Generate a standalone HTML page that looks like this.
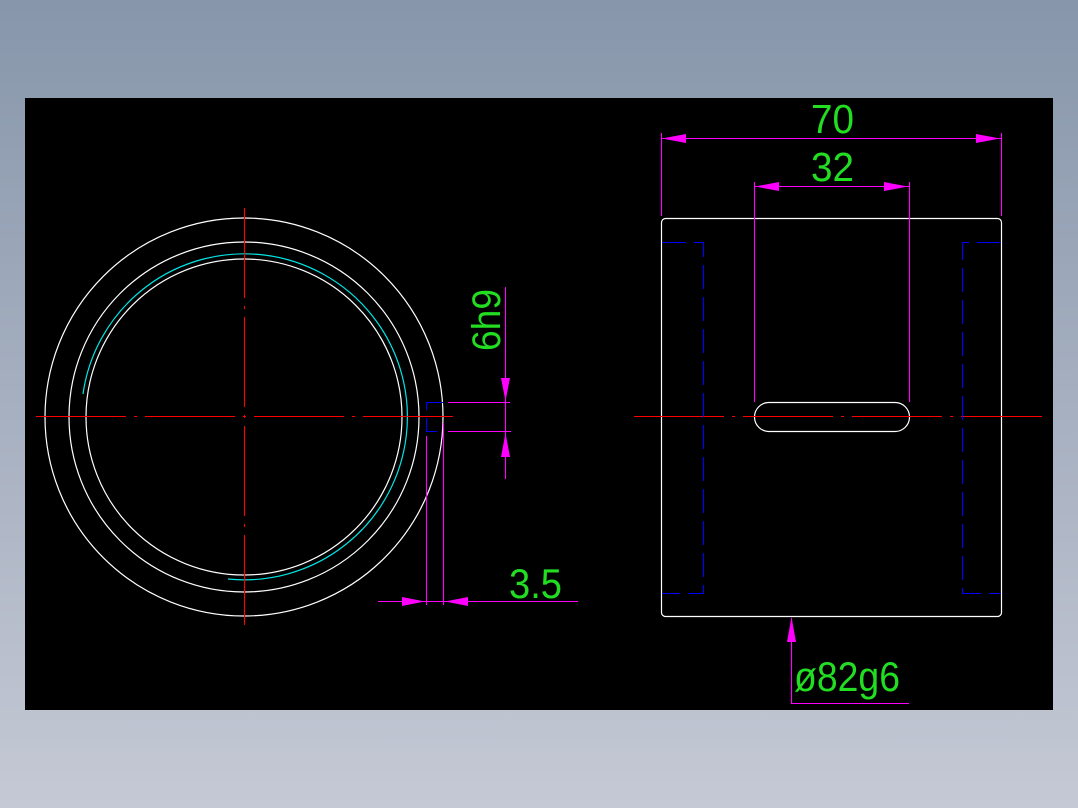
<!DOCTYPE html>
<html><head><meta charset="utf-8"><style>
html,body{margin:0;padding:0;width:1078px;height:808px;overflow:hidden;background:linear-gradient(#8796ab,#c5c9d5);}
svg{position:absolute;left:0;top:0}
text{font-family:"Liberation Sans",sans-serif;fill:#22dd22;font-weight:normal}
</style></head><body>
<svg width="1078" height="808" viewBox="0 0 1078 808">
<rect x="25" y="98" width="1028" height="612" fill="#000"/>
<g fill="none" stroke="#fff" stroke-width="1.2">
<circle cx="244" cy="417" r="199"/>
<circle cx="244" cy="417" r="175"/>
<circle cx="244" cy="417" r="158"/>
<rect x="661.5" y="218.5" width="340" height="398" rx="4"/>
<rect x="754.5" y="402.5" width="155" height="29" rx="14.5"/>
</g>
<path d="M83 394 A163 163 0 1 1 228 579" fill="none" stroke="#00e5e5" stroke-width="1.2"/>
<g stroke="#f00" stroke-width="1.1" fill="none" stroke-dasharray="90 8 3 8">
<line x1="36" y1="416.5" x2="455" y2="416.5"/>
<line x1="244.5" y1="208" x2="244.5" y2="627"/>
<line x1="634" y1="416.5" x2="1042" y2="416.5"/>
</g>
<g stroke="#0000ff" stroke-width="1.1" fill="none" stroke-dasharray="24 8">
<path d="M662 242.5 H703.5 V593.5 H662"/>
<path d="M1001 242.5 H962.5 V593.5 H1001"/>
<path d="M443 402.5 H426.5 V431.5 H443"/>
</g>
<g stroke="#ff00ff" stroke-width="1.1" fill="none">
<line x1="661.5" y1="133" x2="661.5" y2="216"/>
<line x1="1001.5" y1="133" x2="1001.5" y2="216"/>
<line x1="661" y1="138.5" x2="1001" y2="138.5"/>
<line x1="754.5" y1="182" x2="754.5" y2="402"/>
<line x1="909.5" y1="182" x2="909.5" y2="402"/>
<line x1="754" y1="186.5" x2="909" y2="186.5"/>
<path d="M791.5 618 V703.5 H909"/>
<line x1="505.5" y1="287" x2="505.5" y2="479"/>
<line x1="448" y1="402.5" x2="510" y2="402.5"/>
<line x1="448" y1="431.5" x2="511" y2="431.5"/>
<line x1="378" y1="601.5" x2="578" y2="601.5"/>
<line x1="426.5" y1="436" x2="426.5" y2="605"/>
<line x1="443.5" y1="423" x2="443.5" y2="605"/>
</g>
<g fill="#ff00ff">
<path d="M662 138.5 L686 134 V143 Z"/>
<path d="M1000 138.5 L976 134 V143 Z"/>
<path d="M755 186.5 L779 182 V191 Z"/>
<path d="M908 186.5 L884 182 V191 Z"/>
<path d="M791.5 617 L787 642 H796 Z"/>
<path d="M505.5 401 L501 378 H510 Z"/>
<path d="M505.5 433 L501 457 H510 Z"/>
<path d="M425 601.5 L402 597 V606 Z"/>
<path d="M445 601.5 L468 597 V606 Z"/>
</g>
<text x="811" y="133" font-size="41" textLength="43" lengthAdjust="spacingAndGlyphs">70</text>
<text x="811" y="181" font-size="41" textLength="43" lengthAdjust="spacingAndGlyphs">32</text>
<text x="509" y="598" font-size="42" textLength="53" lengthAdjust="spacingAndGlyphs">3.5</text>
<text x="794" y="691" font-size="42" textLength="106" lengthAdjust="spacingAndGlyphs">ø82g6</text>
<text transform="translate(500 351) rotate(-90)" font-size="40" textLength="62" lengthAdjust="spacingAndGlyphs">6h9</text>
</svg>
</body></html>
